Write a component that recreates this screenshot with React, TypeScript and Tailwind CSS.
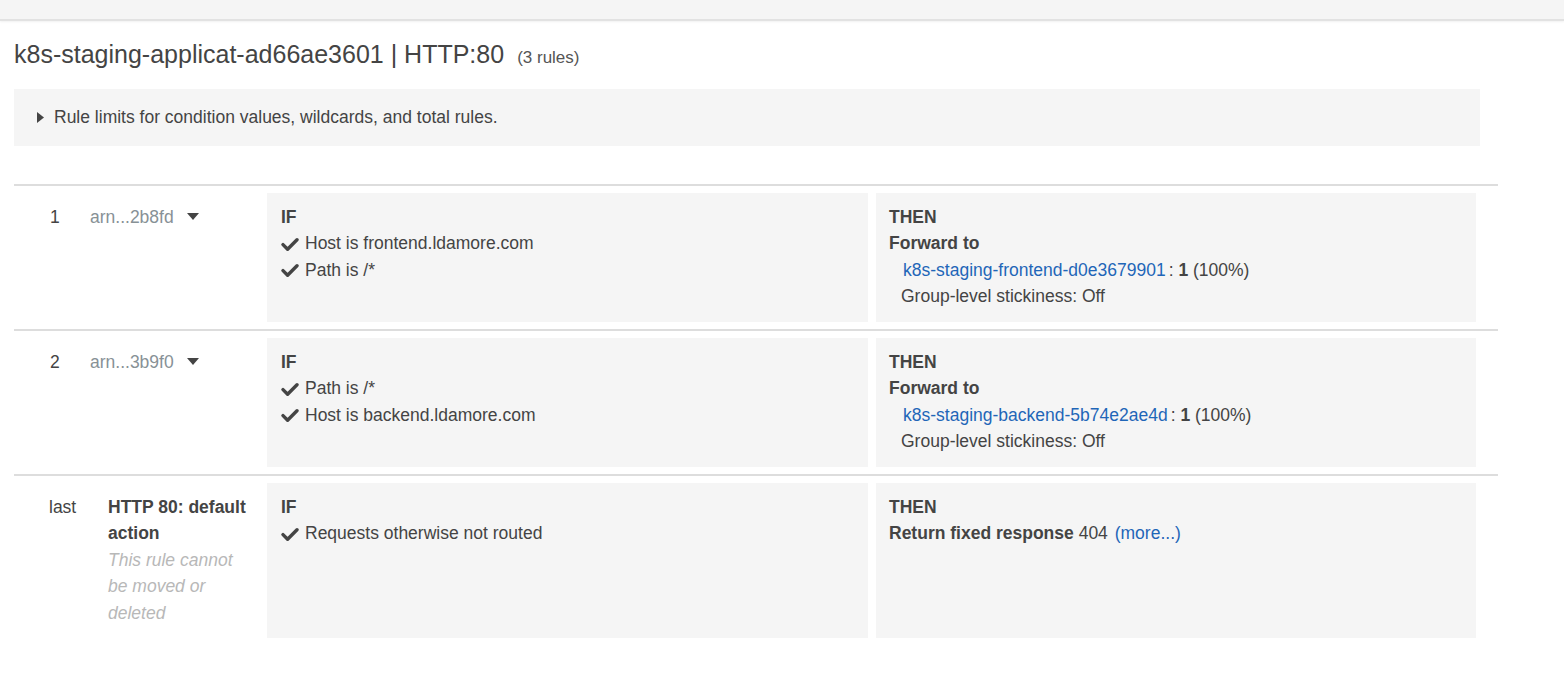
import React from 'react';

const CheckIcon: React.FC = () => (
  <svg viewBox="0 0 18 15" className="w-[18px] h-[15px] flex-shrink-0 mr-[6px] mt-[2px]" aria-hidden="true">
    <path d="M2 7.6l4.6 4.6L16 2.8" fill="none" stroke="#444" strokeWidth="3.4" strokeLinejoin="round" strokeLinecap="round" />
  </svg>
);

const Caret: React.FC = () => (
  <svg viewBox="0 0 12 7" className="w-[12px] h-[7px] ml-[13px] fill-[#444]" aria-hidden="true">
    <path d="M0 0h12L6 7z" />
  </svg>
);

const Condition: React.FC<{ text: string }> = ({ text }) => (
  <div className="flex items-center">
    <CheckIcon />
    <span>{text}</span>
  </div>
);

type Rule = {
  num: string;
  arn: string;
  conditions: string[];
  target: string;
};

const rules: Rule[] = [
  {
    num: '1',
    arn: 'arn...2b8fd',
    conditions: ['Host is frontend.ldamore.com', 'Path is /*'],
    target: 'k8s-staging-frontend-d0e3679901',
  },
  {
    num: '2',
    arn: 'arn...3b9f0',
    conditions: ['Path is /*', 'Host is backend.ldamore.com'],
    target: 'k8s-staging-backend-5b74e2ae4d',
  },
];

const IfCell: React.FC<{ children: React.ReactNode }> = ({ children }) => (
  <div className="w-[601px] bg-[#f5f5f5] pl-[14px] pt-[11px] pb-[12px]">
    <div className="font-bold">IF</div>
    {children}
  </div>
);

const ThenCell: React.FC<{ children: React.ReactNode }> = ({ children }) => (
  <div className="w-[600px] ml-[8px] bg-[#f5f5f5] pl-[13px] pt-[11px] pb-[12px]">
    <div className="font-bold">THEN</div>
    {children}
  </div>
);

export default function App() {
  return (
    <div
      className="min-h-screen bg-white text-[#444] text-[17.5px] leading-[26.5px]"
      style={{ fontFamily: '"Liberation Sans", Arial, sans-serif' }}
    >
      {/* top strip */}
      <div className="h-[21px] bg-[#f5f5f5] border-b-2 border-[#e2e2e2] shadow-[0_1px_2px_rgba(0,0,0,0.06)]" />

      <div className="pl-[14px]">
        {/* title */}
        <div className="mt-[18px] flex items-baseline">
          <span className="text-[25px] leading-[30px] text-[#444]">k8s-staging-applicat-ad66ae3601 | HTTP:80</span>
          <span className="ml-[13px] text-[17px] text-[#555]">(3 rules)</span>
        </div>

        {/* rule limits */}
        <div className="mt-[17px] w-[1466px] h-[57px] bg-[#f5f5f5] flex items-center pl-[23px]">
          <svg viewBox="0 0 7 11" className="w-[7px] h-[11px] fill-[#444] mr-[10px]" aria-hidden="true">
            <path d="M0 0l7 5.5L0 11z" />
          </svg>
          <span>Rule limits for condition values, wildcards, and total rules.</span>
        </div>

        {/* rules table */}
        <div className="mt-[38px] w-[1484px] border-t-2 border-[#ddd]">
          {rules.map((r) => (
            <div key={r.num} className="flex py-[7px] border-b-2 border-[#ddd]">
              <div className="w-[253px] flex pl-[36px] pt-[11px]">
                <span className="w-[40px]">{r.num}</span>
                <div className="flex items-center h-[26.5px]">
                  <span className="text-[#879196]">{r.arn}</span>
                  <Caret />
                </div>
              </div>
              <IfCell>
                {r.conditions.map((c) => (
                  <Condition key={c} text={c} />
                ))}
              </IfCell>
              <ThenCell>
                <div className="font-bold">Forward to</div>
                <div className="pl-[14px]">
                  <span className="text-[#1f66b8]">{r.target}</span>
                  <span className="ml-[3px]">: </span>
                  <span className="font-bold">1</span>
                  <span> (100%)</span>
                </div>
                <div className="pl-[12px]">Group-level stickiness: Off</div>
              </ThenCell>
            </div>
          ))}

          <div className="flex pt-[7px]">
            <div className="w-[253px] flex pl-[35px] pt-[11px] pb-[12px]">
              <span className="w-[59px]">last</span>
              <div className="w-[143px]">
                <div className="font-bold">HTTP 80: default action</div>
                <div className="italic text-[#b8b8b8]">This rule cannot be moved or deleted</div>
              </div>
            </div>
            <IfCell>
              <Condition text="Requests otherwise not routed" />
            </IfCell>
            <ThenCell>
              <div>
                <span className="font-bold">Return fixed response</span>
                <span> 404 </span>
                <span className="ml-[2px] text-[#1f66b8]">(more...)</span>
              </div>
            </ThenCell>
          </div>
        </div>
      </div>
    </div>
  );
}
